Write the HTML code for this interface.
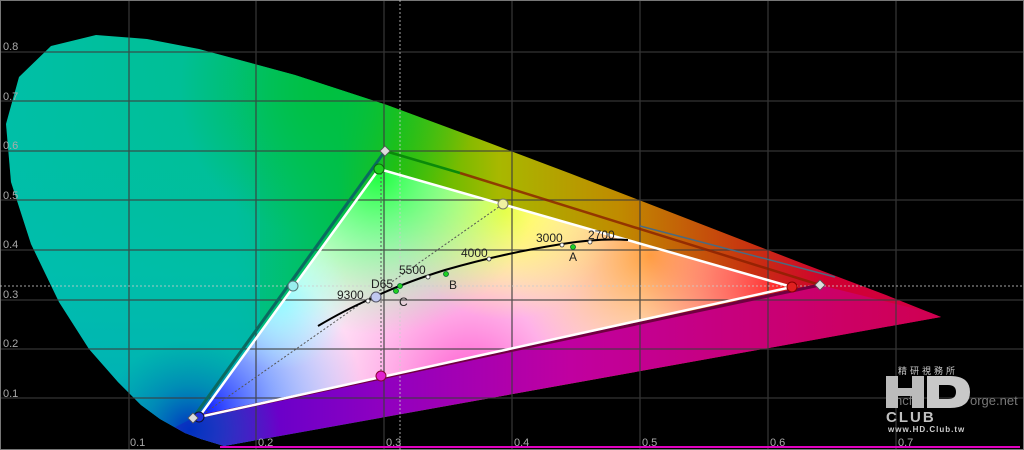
<!DOCTYPE html>
<html><head><meta charset="utf-8"><style>
html,body{margin:0;padding:0;background:#000;}
svg{display:block}
text{font-family:"Liberation Sans",sans-serif;}
</style></head><body>
<svg width="1024" height="450" viewBox="0 0 1024 450" xmlns="http://www.w3.org/2000/svg">
<defs>
<clipPath id="loc"><path d="M224,446 L201,439 L185,433 L160,419 L141,405 L118,382 L89,349 L59,302 L31,244 L11,182 L6,124 L19,77 L51,46 L96,35 L147,39 L199,49 L295,75 L387,105 L479,139 L569,173 L657,207 L737,238 L804,264 L886,295 L941,317 Z"/></clipPath>
<clipPath id="tri"><path d="M379,169 L792,287 L199,417 Z"/></clipPath>
<linearGradient id="base" gradientUnits="userSpaceOnUse" x1="0" y1="0" x2="941" y2="0">
<stop offset="0" stop-color="#00bfa8"/><stop offset="0.25" stop-color="#00bf90"/><stop offset="0.36" stop-color="#00c050"/><stop offset="0.42" stop-color="#30c000"/><stop offset="0.53" stop-color="#a8b800"/><stop offset="0.66" stop-color="#c08a00"/><stop offset="0.8" stop-color="#c83010"/><stop offset="0.88" stop-color="#d00030"/><stop offset="1" stop-color="#d00048"/>
</linearGradient>
<linearGradient id="vert" gradientUnits="userSpaceOnUse" x1="0" y1="60" x2="0" y2="420">
<stop offset="0" stop-color="#00c0a0" stop-opacity="0"/><stop offset="0.6" stop-color="#00bcb8" stop-opacity="0.5"/><stop offset="1" stop-color="#00a8c0" stop-opacity="0.8"/>
</linearGradient>
<linearGradient id="bot" gradientUnits="userSpaceOnUse" x1="200" y1="0" x2="940" y2="0">
<stop offset="0" stop-color="#5000d0"/><stop offset="0.25" stop-color="#9000c0"/><stop offset="0.5" stop-color="#c000a0"/><stop offset="1" stop-color="#d00050"/>
</linearGradient>
<radialGradient id="gTop" gradientUnits="userSpaceOnUse" cx="330" cy="90" r="150"><stop offset="0" stop-color="#00c040"/><stop offset="1" stop-color="#00c040" stop-opacity="0"/></radialGradient>
<radialGradient id="bl" gradientUnits="userSpaceOnUse" cx="190" cy="430" r="90"><stop offset="0" stop-color="#0030c0"/><stop offset="0.5" stop-color="#0060b8" stop-opacity="0.45"/><stop offset="1" stop-color="#0080b0" stop-opacity="0"/></radialGradient>
<radialGradient id="tG" gradientUnits="userSpaceOnUse" cx="379" cy="175" r="160"><stop offset="0" stop-color="#20ff40"/><stop offset="0.4" stop-color="#40ff60" stop-opacity="0.6"/><stop offset="1" stop-color="#80ff80" stop-opacity="0"/></radialGradient>
<radialGradient id="tY" gradientUnits="userSpaceOnUse" cx="505" cy="210" r="110"><stop offset="0" stop-color="#ffff40"/><stop offset="1" stop-color="#ffff60" stop-opacity="0"/></radialGradient>
<radialGradient id="tO" gradientUnits="userSpaceOnUse" cx="650" cy="255" r="140"><stop offset="0" stop-color="#ffa040"/><stop offset="1" stop-color="#ffb060" stop-opacity="0"/></radialGradient>
<radialGradient id="tR" gradientUnits="userSpaceOnUse" cx="790" cy="287" r="150"><stop offset="0" stop-color="#ff1010"/><stop offset="0.5" stop-color="#ff4040" stop-opacity="0.6"/><stop offset="1" stop-color="#ff6060" stop-opacity="0"/></radialGradient>
<radialGradient id="tM" gradientUnits="userSpaceOnUse" cx="470" cy="385" r="200"><stop offset="0" stop-color="#ff20c0" stop-opacity="0.75"/><stop offset="0.6" stop-color="#ff60d0" stop-opacity="0.3"/><stop offset="1" stop-color="#ff80e0" stop-opacity="0"/></radialGradient>
<radialGradient id="tB" gradientUnits="userSpaceOnUse" cx="205" cy="410" r="160"><stop offset="0" stop-color="#1020ff"/><stop offset="0.45" stop-color="#4070ff" stop-opacity="0.6"/><stop offset="1" stop-color="#60a0ff" stop-opacity="0"/></radialGradient>
<radialGradient id="tC" gradientUnits="userSpaceOnUse" cx="280" cy="300" r="70"><stop offset="0" stop-color="#80ffff" stop-opacity="0.8"/><stop offset="1" stop-color="#a0ffff" stop-opacity="0"/></radialGradient>
</defs>
<rect width="1024" height="450" fill="#000"/>
<g clip-path="url(#loc)">
<rect width="1024" height="450" fill="url(#base)"/>
<rect width="260" height="450" fill="url(#vert)"/>
<rect width="1024" height="450" fill="url(#gTop)"/>
<path d="M150,440 L193,418 L820,285 L960,320 L960,450 L150,450 Z" fill="url(#bot)"/>
<rect width="1024" height="450" fill="url(#bl)"/>
</g>
<g clip-path="url(#tri)">
<rect width="1024" height="450" fill="#ffffff"/>
<rect width="1024" height="450" fill="url(#tM)"/>
<rect width="1024" height="450" fill="url(#tO)"/>
<rect width="1024" height="450" fill="url(#tY)"/>
<rect width="1024" height="450" fill="url(#tR)"/>
<rect width="1024" height="450" fill="url(#tB)"/>
<rect width="1024" height="450" fill="url(#tG)"/>
<rect width="1024" height="450" fill="url(#tC)"/>
</g>
<!-- grid -->
<g stroke="#3c3c3c" stroke-width="1.3" opacity="0.85">
<line x1="129" y1="0" x2="129" y2="450"/><line x1="256" y1="0" x2="256" y2="450"/><line x1="384" y1="0" x2="384" y2="450"/><line x1="512" y1="0" x2="512" y2="450"/><line x1="640" y1="0" x2="640" y2="450"/><line x1="768" y1="0" x2="768" y2="450"/><line x1="896" y1="0" x2="896" y2="450"/>
<line x1="0" y1="52" x2="1024" y2="52"/><line x1="0" y1="101" x2="1024" y2="101"/><line x1="0" y1="151" x2="1024" y2="151"/><line x1="0" y1="200" x2="1024" y2="200"/><line x1="0" y1="250" x2="1024" y2="250"/><line x1="0" y1="300" x2="1024" y2="300"/><line x1="0" y1="349" x2="1024" y2="349"/><line x1="0" y1="398" x2="1024" y2="398"/>
</g>
<rect x="0.5" y="0.5" width="1023" height="449" fill="none" stroke="#777"/>
<line x1="220" y1="447" x2="1020" y2="447" stroke="#e000c0" stroke-width="2"/>
<!-- dotted -->
<g stroke="#ccc" stroke-width="1" stroke-dasharray="2,2" fill="none" opacity="0.8">
<line x1="0" y1="286" x2="1024" y2="286"/>
<line x1="400" y1="0" x2="400" y2="450"/>
</g>
<g stroke="#555" stroke-width="1" stroke-dasharray="2,2" fill="none">
<line x1="381" y1="169" x2="381" y2="376"/>
<line x1="199" y1="417" x2="503" y2="204"/>
</g>
<!-- target gamut -->
<line x1="385" y1="151" x2="460" y2="173" stroke="#0a8a0a" stroke-width="2.5"/>
<line x1="460" y1="173" x2="820" y2="285" stroke="#8a2000" stroke-width="2.5" opacity="0.8"/>
<line x1="640" y1="226" x2="835" y2="277" stroke="#4a6a80" stroke-width="1.5"/>
<line x1="385" y1="151" x2="193" y2="418" stroke="#0a6a60" stroke-width="3"/>
<line x1="820" y1="285" x2="193" y2="418" stroke="#700040" stroke-width="3"/>
<!-- measured -->
<path d="M379,169 L792,287 L199,417 Z" fill="none" stroke="#fff" stroke-width="2.5"/>
<!-- planck -->
<path d="M318,326 Q345,310 368,300 Q400,284 445,270 Q500,254 562,244 Q600,238 628,240" fill="none" stroke="#000" stroke-width="2"/>
<g fill="#fff" stroke="#333" stroke-width="0.8">
<circle cx="368" cy="301" r="2"/><circle cx="428" cy="277" r="2"/><circle cx="489" cy="259" r="2"/><circle cx="562" cy="245" r="2"/><circle cx="590" cy="242" r="2"/>
</g>
<g fill="#20d020" stroke="#063" stroke-width="0.8">
<circle cx="400" cy="286" r="2.5"/><circle cx="396" cy="291" r="2.5"/><circle cx="446" cy="274" r="2.5"/><circle cx="573" cy="247" r="2.5"/>
</g>
<g font-size="12" fill="#222">
<text x="371" y="288">D65</text><text x="337" y="299">9300</text><text x="399" y="274">5500</text><text x="461" y="257">4000</text><text x="536" y="242">3000</text><text x="588" y="239">2700</text>
<text x="399" y="306">C</text><text x="449" y="289">B</text><text x="569" y="261">A</text>
</g>
<!-- markers -->
<circle cx="379" cy="169" r="5" fill="#20d020" stroke="#0a6a0a"/>
<circle cx="792" cy="287" r="5" fill="#e02020" stroke="#800"/>
<circle cx="199" cy="417" r="5" fill="#2030e0" stroke="#113"/>
<circle cx="293" cy="286" r="5" fill="#9ee" stroke="#577"/>
<circle cx="503" cy="204" r="5" fill="#f0f0a0" stroke="#776"/>
<circle cx="381" cy="376" r="5" fill="#e020d0" stroke="#803"/>
<circle cx="376" cy="297" r="5" fill="#c0c8f0" stroke="#556"/>
<g fill="#ddd" stroke="#555" stroke-width="0.8">
<path d="M385,146 L390,151 L385,156 L380,151 Z"/>
<path d="M820,280 L825,285 L820,290 L815,285 Z"/>
<path d="M193,413 L198,418 L193,423 L188,418 Z"/>
</g>
<!-- axis labels -->
<g font-size="11" fill="#aaa">
<text x="3" y="50">0.8</text><text x="3" y="100">0.7</text><text x="3" y="149">0.6</text><text x="3" y="199">0.5</text><text x="3" y="248">0.4</text><text x="3" y="298">0.3</text><text x="3" y="347">0.2</text><text x="3" y="397">0.1</text>
<text x="130" y="446">0.1</text><text x="258" y="446">0.2</text><text x="386" y="446">0.3</text><text x="514" y="446">0.4</text><text x="642" y="446">0.5</text><text x="770" y="446">0.6</text><text x="898" y="446">0.7</text>
</g>
<!-- logo -->
<text x="898" y="374" font-size="9" fill="#ccc" letter-spacing="3">精研視務所</text>
<text x="895" y="405" font-size="13" fill="#777">hcfr.</text><text x="970" y="405" font-size="13" fill="#777">orge.net</text>
<rect x="886" y="376" width="12" height="32" fill="#bbb"/>
<rect x="896" y="388" width="18" height="8" fill="#bbb"/>
<rect x="912" y="376" width="12" height="32" fill="#bbb"/>
<path d="M927,376 H950 Q970,376 970,392 Q970,408 950,408 H927 Z M939,385 V399 H948 Q956,399 956,392 Q956,385 948,385 Z" fill="#c8c8c8" fill-rule="evenodd"/>
<text x="886" y="422" font-size="15" font-weight="bold" fill="#c0c0c0" letter-spacing="2">CLUB</text>
<text x="888" y="432" font-size="8" font-weight="bold" fill="#ccc" letter-spacing="1">www.HD.Club.tw</text>
</svg>
</body></html>
